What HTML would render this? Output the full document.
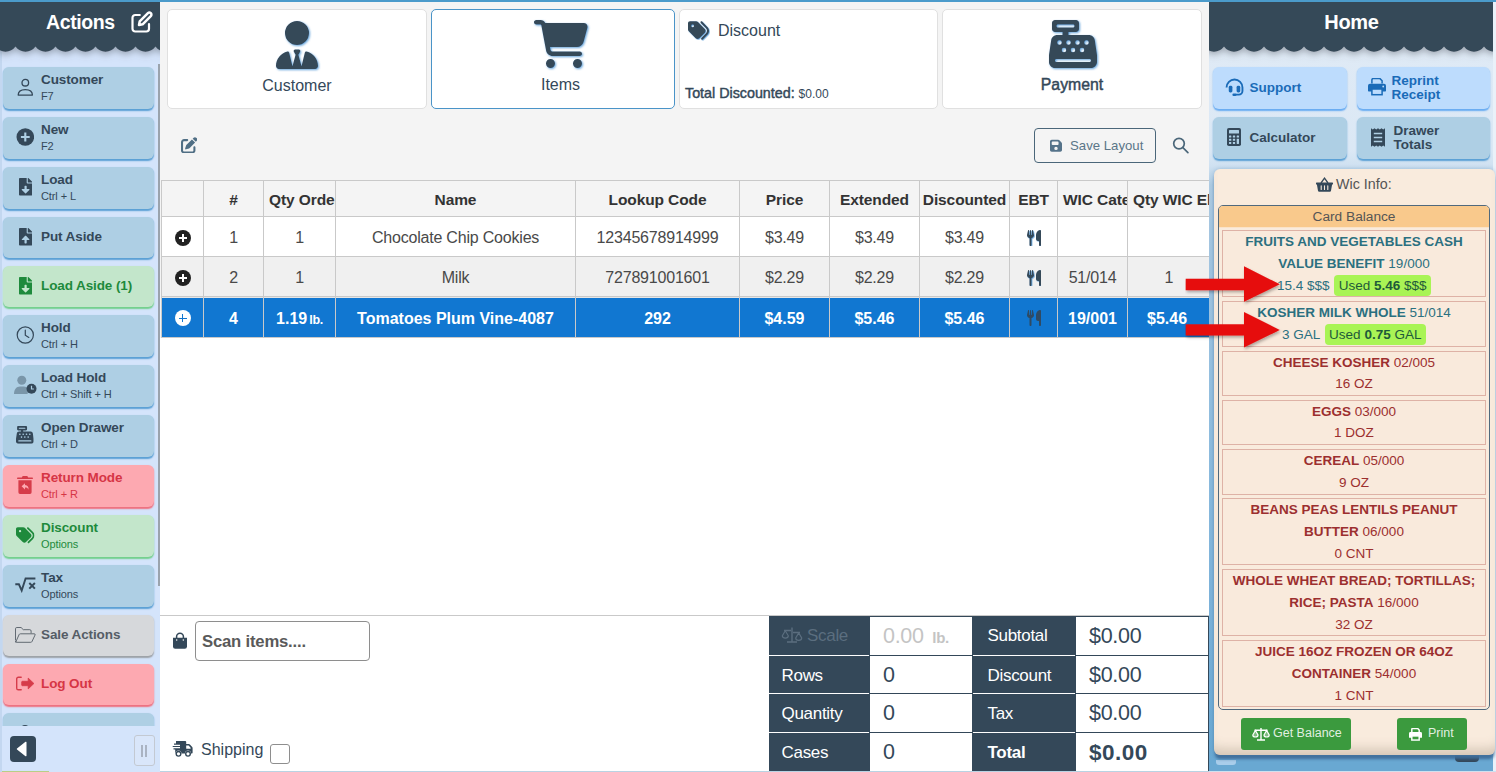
<!DOCTYPE html>
<html lang="en">
<head>
<meta charset="utf-8">
<title>POS</title>
<style>
*{box-sizing:border-box;margin:0;padding:0}
html,body{width:1496px;height:772px;overflow:hidden;background:#f4f4f4;font-family:"Liberation Sans",sans-serif;color:#344859}
.abs{position:absolute}
#app{position:relative;width:1496px;height:772px;overflow:hidden;background:#f4f4f4}
#topstrip{left:0;top:0;width:1496px;height:2px;background:#4b9bcb;z-index:50}
/* ---------- left sidebar ---------- */
#left{left:0;top:0;width:160px;height:772px;background:#d4e4fb;overflow:hidden}
.hdr{left:0;top:0;height:47px;background:#344859;color:#fff;font-weight:bold;font-size:19px}
.scal{left:0;top:41px;height:12px}
.lb{left:3px;width:151px;height:42px;border-radius:6px;background:#aecfe4;box-shadow:0 1.500px 1.500px 0 #5a9fd4;color:#344859}
.lb .t{position:absolute;left:38px;top:5px;font-size:13.500px;font-weight:bold;letter-spacing:-0.1px;white-space:nowrap;line-height:16px}
.lb .s{position:absolute;left:38px;top:22px;font-size:11px;white-space:nowrap;line-height:14px;letter-spacing:-0.1px}
.lb.one{height:40px}
.lb.one .t{top:12px}
.lb svg{position:absolute}
.lb.g{background:#c3e6cb;box-shadow:0 1.500px 1.500px 0 #72cf8c;color:#1e8a3c}
.lb.r{background:#fda9b1;box-shadow:0 1.500px 1.500px 0 #ef6f7e;color:#d63545}
.lb.gr{background:#d6d8db;box-shadow:0 1.500px 1.500px 0 #9da1a6;color:#555d66}
/* ---------- main ---------- */
.card{top:9px;height:100px;background:#fff;border:1px solid #e0e0e0;border-radius:5px}
.card .lbl{position:absolute;left:0;right:0;text-align:center;font-size:16px;top:66px;line-height:20px}

#grid table{border-collapse:collapse;table-layout:fixed;width:1066px;font-size:16px;color:#333}
#grid th,#grid td{border:1px solid #c9c9c9;text-align:center;white-space:nowrap;overflow:hidden;padding:0;position:relative}
#grid th{height:36px;padding-top:2.500px;background:#f4f4f4;font-weight:bold;font-size:15.500px;color:#333;letter-spacing:-0.100px}
#grid th.cl{text-align:left;padding-left:5px}
#grid td{height:40px;padding-top:3px;letter-spacing:-0.200px;color:#494949}
#grid tr.r1 td{background:#fff}
#grid tr.r2 td{background:#f0f0f0}
#grid tr.r3 td{padding-top:3px;box-shadow:inset 0 1px 0 #e6e6e6;background:#1177d1;color:#fff;font-weight:bold;border-color:#c9c9c9;letter-spacing:0;height:41px}
i.pc{display:inline-block;width:16px;height:16px;border-radius:50%;background:#222;position:relative;vertical-align:middle;top:-1px}
i.pc:before,i.pc:after{content:"";position:absolute;background:#fff;left:4px;top:7px;width:8px;height:2px}
i.pc:after{left:7px;top:4px;width:2px;height:8px}
i.pc.w{background:#fff}
i.pc.w:before,i.pc.w:after{background:#1177d1;height:1.500px;top:7.250px}
i.pc.w:after{width:1.500px;left:7.250px;top:4px;height:8px}

#tot .tl,#tot .tv{position:absolute;overflow:hidden}
#tot .tl{background:#344859;color:#fff;font-size:17px;border-bottom:1px solid #fff}
#tot .tl span{left:14.500px}
#tot .tv{background:#fff;color:#344859;font-size:21.500px;border:1px solid #344859;border-top:none}
#tot span{position:absolute;left:13px;top:0;line-height:39px;white-space:nowrap;letter-spacing:-0.300px}
svg.ut{vertical-align:middle;position:relative;top:-1px}

.rb{height:42px;border-radius:6px;font-size:13.500px;font-weight:bold;white-space:nowrap}
.rb.b1{background:#bddcfd;box-shadow:0 1.500px 1.500px 0 #68acf2;color:#1a6bb8}
.rb.b2{background:#aecfe4;box-shadow:0 1.500px 1.500px 0 #5a9fd4;color:#344859}
#wic{background:#f9ebdd;border-radius:6px;box-shadow:0 0 4px 0 rgba(90,140,185,.45),0 5px 3px -1px rgba(60,105,150,.95),inset 0 -14px 12px -8px rgba(120,100,80,.28)}
#cb{border:1px solid #50697d;border-radius:5px}
.wi{position:absolute;left:3px;width:264px;border:1px solid #deb2a6;text-align:center;font-size:13.500px;line-height:21.800px;color:#9c2f2f;white-space:nowrap;background:#f9eadc;overflow:hidden}
.wi.t{color:#2b7080}
.wi b{font-weight:bold}
.wi .u{display:inline-block;background:#a9f455;color:#1f5a3a;border-radius:4px;padding:0 4.500px;line-height:21px;margin-left:1px}
.gb{height:32px;background:#3b9a3e;border-radius:3px;color:rgba(255,255,255,.86);font-size:12.500px;line-height:31.500px;white-space:nowrap}
</style>
</head>
<body>
<div id="app">
<svg width="0" height="0" style="position:absolute"><defs><filter id="ish" x="-20%" y="-20%" width="150%" height="150%"><feDropShadow dx="1" dy="1" stdDeviation="1" flood-color="#3a8bd0" flood-opacity="0.800"/></filter><filter id="ish2" x="-20%" y="-20%" width="150%" height="150%"><feDropShadow dx="0.700" dy="0.700" stdDeviation="0.700" flood-color="#3a8bd0" flood-opacity="0.800"/></filter><filter id="ash" x="-10%" y="-20%" width="125%" height="150%"><feDropShadow dx="1" dy="2" stdDeviation="1.500" flood-color="#000" flood-opacity="0.300"/></filter><symbol id="i-cart" viewBox="0 0 576 512"><path d="M0 24C0 10.700 10.700 0 24 0H69.500c22 0 41.500 12.800 50.600 32h411c26.300 0 45.500 25 38.600 50.400l-41 152.300c-8.500 31.400-37 53.300-69.500 53.300H170.700l5.400 28.500c2.200 11.300 12.100 19.500 23.600 19.500H488c13.300 0 24 10.700 24 24s-10.700 24-24 24H199.700c-34.600 0-64.300-24.600-70.700-58.500L77.400 54.500c-.7-3.800-4-6.500-7.900-6.500H24C10.700 48 0 37.300 0 24zM128 464a48 48 0 1 1 96 0 48 48 0 1 1 -96 0zm336-48a48 48 0 1 1 0 96 48 48 0 1 1 0-96z"/></symbol><symbol id="i-reg" viewBox="0 0 512 512"><path d="M64 0C46.300 0 32 14.300 32 32V96c0 17.700 14.300 32 32 32h80v32H87c-31.600 0-58.500 23.100-63.300 54.400L1.100 364.100C.4 368.800 0 373.600 0 378.400V448c0 35.300 28.700 64 64 64H448c35.300 0 64-28.700 64-64V378.400c0-4.800-.4-9.600-1.100-14.400L488.200 214.400C483.500 183.100 456.600 160 425 160H208V128h80c17.700 0 32-14.300 32-32V32c0-17.700-14.300-32-32-32H64zM96 48H256c8.800 0 16 7.200 16 16s-7.200 16-16 16H96c-8.800 0-16-7.200-16-16s7.200-16 16-16zM64 432c0-8.800 7.200-16 16-16H432c8.800 0 16 7.200 16 16s-7.200 16-16 16H80c-8.800 0-16-7.200-16-16zm48-168a24 24 0 1 1 0-48 24 24 0 1 1 0 48zm120-24a24 24 0 1 1 -48 0 24 24 0 1 1 48 0zM160 344a24 24 0 1 1 0-48 24 24 0 1 1 0 48zM328 240a24 24 0 1 1 -48 0 24 24 0 1 1 48 0zM256 344a24 24 0 1 1 0-48 24 24 0 1 1 0 48zM424 240a24 24 0 1 1 -48 0 24 24 0 1 1 48 0zM352 344a24 24 0 1 1 0-48 24 24 0 1 1 0 48z"/></symbol><symbol id="i-tie" viewBox="0 0 448 512"><path d="M96 128a128 128 0 1 0 256 0A128 128 0 1 0 96 128zm94.500 200.200l18.600 31L175.800 483.100l-36-146.900c-2-8.100-9.800-13.400-17.900-11.300C51.900 342.400 0 405.800 0 481.300c0 17 13.800 30.700 30.700 30.700H162.500c0 0 0 0 .1 0H168 280h5.500c0 0 0 0 .1 0H417.300c17 0 30.700-13.800 30.700-30.700c0-75.500-51.900-138.900-121.900-156.400c-8.100-2-15.900 3.300-17.900 11.300l-36 146.900L238.900 359.200l18.600-31c6.400-10.700-1.300-24.200-13.700-24.200H224 204.300c-12.400 0-20.100 13.600-13.700 24.200z"/></symbol><symbol id="i-tags" viewBox="0 0 512 512"><path d="M345 39.100L472.800 168.400c52.400 53 52.400 138.200 0 191.200L360.800 472.900c-9.300 9.400-24.500 9.500-33.900 .2s-9.500-24.500-.2-33.900L438.600 325.900c33.900-34.300 33.900-89.400 0-123.700L310.900 72.900c-9.300-9.400-9.200-24.600 .2-33.900s24.600-9.200 33.900 .2zM0 229.500V80C0 53.500 21.500 32 48 32H197.500c17 0 33.300 6.700 45.300 18.700l168 168c25 25 25 65.500 0 90.500L277.300 442.700c-25 25-65.500 25-90.500 0l-168-168C6.700 262.700 0 246.500 0 229.500zM144 144a32 32 0 1 0 -64 0 32 32 0 1 0 64 0z"/></symbol><symbol id="i-pen" viewBox="0 0 512 512"><path d="M471.600 21.700c-21.900-21.900-57.300-21.900-79.200 0L362.300 51.700l97.900 97.900 30.100-30.100c21.900-21.900 21.900-57.300 0-79.200L471.600 21.700zm-299.200 220c-6.100 6.100-10.800 13.600-13.500 21.900l-29.600 88.800c-2.900 8.600-.6 18.100 5.800 24.600s15.900 8.700 24.600 5.800l88.800-29.600c8.200-2.700 15.700-7.400 21.900-13.500L437.700 172.300 339.700 74.300 172.400 241.700zM96 64C43 64 0 107 0 160V416c0 53 43 96 96 96H352c53 0 96-43 96-96V320c0-17.700-14.300-32-32-32s-32 14.300-32 32v96c0 17.700-14.300 32-32 32H96c-17.700 0-32-14.300-32-32V160c0-17.700 14.300-32 32-32h96c17.700 0 32-14.300 32-32s-14.300-32-32-32H96z"/></symbol><symbol id="i-floppy" viewBox="0 0 448 512"><path d="M64 32C28.700 32 0 60.700 0 96V416c0 35.300 28.700 64 64 64H384c35.300 0 64-28.700 64-64V173.300c0-17-6.700-33.300-18.700-45.300L352 50.700C340 38.700 323.700 32 306.700 32H64zm0 96c0-17.700 14.300-32 32-32H288c17.700 0 32 14.300 32 32v64c0 17.700-14.300 32-32 32H96c-17.700 0-32-14.300-32-32V128zM224 288a64 64 0 1 1 0 128 64 64 0 1 1 0-128z"/></symbol><symbol id="ut" viewBox="0 0 448 512"><path d="M416 0C400 0 288 32 288 176V288c0 35.300 28.700 64 64 64h32V480c0 17.700 14.300 32 32 32s32-14.300 32-32V352 240 32c0-17.700-14.300-32-32-32zM64 16C64 7.800 57.900 1 49.700 .1S34.200 4.600 32.400 12.500L2.100 148.800C.7 155.100 0 161.500 0 167.900c0 45.900 35.100 83.600 80 87.700V480c0 17.700 14.300 32 32 32s32-14.300 32-32V255.600c44.900-4.100 80-41.800 80-87.700c0-6.400-.7-12.800-2.100-19.100L191.600 12.500c-1.800-8-9.300-13.300-17.400-12.400S160 7.800 160 16V150.200c0 5.400-4.400 9.800-9.800 9.800c-5.100 0-9.300-3.900-9.800-9L127.900 14.600C127.200 6.300 120.300 0 112 0s-15.200 6.300-15.900 14.600L83.700 151c-.5 5.100-4.700 9-9.800 9c-5.400 0-9.800-4.400-9.800-9.800V16z"/></symbol></defs></svg>
<div id="topstrip" class="abs"></div>

<!-- LEFT SIDEBAR -->
<div id="left" class="abs">
  <div class="abs" style="left:158px;top:64px;width:2px;height:522px;background:#9aa3ad"></div>
  <div id="lbtns">
  <div class="abs lb" style="top:67px">
    <svg style="left:12px;top:10px" width="22" height="22" viewBox="0 0 22 22" fill="none" stroke="#344859" stroke-width="1.3"><circle cx="10.3" cy="5.7" r="3.3"/><path d="M3.2,18.1 C3.2,14.3 6,12.7 10.3,12.7 C14.6,12.7 17.4,14.3 17.4,18.1 Z" stroke-linejoin="round"/></svg>
    <span class="t">Customer</span><span class="s">F7</span></div>
  <div class="abs lb" style="top:117px">
    <svg style="left:13px;top:11px" width="18" height="18" viewBox="0 0 18 18"><circle cx="9.3" cy="9" r="8.8" fill="#344859"/><path d="M9.3,4.6v8.8M4.9,9h8.8" stroke="#aecfe4" stroke-width="2.1"/></svg>
    <span class="t">New</span><span class="s">F2</span></div>
  <div class="abs lb" style="top:167px">
    <svg style="left:15.8px;top:11.2px" width="13.2" height="17.6" viewBox="0 0 384 512"><path fill="#344859" d="M224 136V0H24C10.700 0 0 10.700 0 24v464c0 13.300 10.700 24 24 24h336c13.300 0 24-10.700 24-24V160H248c-13.200 0-24-10.800-24-24zM377 105L279.100 7c-4.500-4.500-10.600-7-17-7H256v128h128v-6.100c0-6.300-2.500-12.400-7-16.900z"/><path fill="#aecfe4" d="M300 347l-96 96c-6.600 6.600-17.400 6.600-24 0l-96-96c-10-10-3-27 11-27H160v-80c0-9 7-16 16-16h32c9 0 16 7 16 16v80h65c14 0 21 17 11 27z"/></svg>
    <span class="t">Load</span><span class="s">Ctrl + L</span></div>
  <div class="abs lb one" style="top:217px;height:41px">
    <svg style="left:15.8px;top:11.3px" width="13.2" height="17.6" viewBox="0 0 384 512"><path fill="#344859" d="M224 136V0H24C10.700 0 0 10.700 0 24v464c0 13.300 10.700 24 24 24h336c13.300 0 24-10.700 24-24V160H248c-13.200 0-24-10.800-24-24zM377 105L279.100 7c-4.500-4.500-10.600-7-17-7H256v128h128v-6.100c0-6.300-2.500-12.400-7-16.900z"/><path fill="#aecfe4" d="M289 352H224v80c0 9-7 16-16 16h-32c-9 0-16-7-16-16v-80H95c-14 0-21-17-11-27l96-96c6.600-6.600 17.400-6.600 24 0l96 96c10 10 3 27-11 27z"/></svg>
    <span class="t">Put Aside</span></div>
  <div class="abs lb one g" style="top:266px;height:41px">
    <svg style="left:15.8px;top:11.3px" width="13.2" height="17.6" viewBox="0 0 384 512"><path fill="#1e8a3c" d="M224 136V0H24C10.700 0 0 10.700 0 24v464c0 13.300 10.700 24 24 24h336c13.300 0 24-10.700 24-24V160H248c-13.200 0-24-10.800-24-24zM377 105L279.100 7c-4.500-4.500-10.600-7-17-7H256v128h128v-6.100c0-6.300-2.500-12.400-7-16.900z"/><path fill="#c3e6cb" d="M300 347l-96 96c-6.600 6.600-17.400 6.600-24 0l-96-96c-10-10-3-27 11-27H160v-80c0-9 7-16 16-16h32c9 0 16 7 16 16v80h65c14 0 21 17 11 27z"/></svg>
    <span class="t">Load Aside (1)</span></div>
  <div class="abs lb" style="top:315px">
    <svg style="left:13px;top:11px" width="18" height="18" viewBox="0 0 18 18" fill="none" stroke="#344859" stroke-width="1.2"><circle cx="9.3" cy="9" r="8.1"/><path d="M9.3,4.2V9.2L12.8,11.4" stroke-linecap="round"/></svg>
    <span class="t">Hold</span><span class="s">Ctrl + H</span></div>
  <div class="abs lb" style="top:365px">
    <svg style="left:10px;top:9px" width="26" height="22" viewBox="0 0 26 22"><g fill="#344859" opacity="0.42"><circle cx="8.8" cy="6.3" r="4.5"/><path d="M1,20 C1,15.200 3.600,12.500 7,12.500 H10.600 C13,12.500 14.800,13.600 15.600,15.500 L14.500,20 Z"/></g><circle cx="18.500" cy="14.800" r="5" fill="#344859"/><path d="M18.500,11.800V15H20.900" stroke="#aecfe4" stroke-width="1.2" fill="none"/></svg>
    <span class="t">Load Hold</span><span class="s">Ctrl + Shift + H</span></div>
  <div class="abs lb" style="top:415px">
    <svg style="left:13.300px;top:11px" width="17.700" height="17.700"><use href="#i-reg" fill="#344859"/></svg>
    <span class="t">Open Drawer</span><span class="s">Ctrl + D</span></div>
  <div class="abs lb r" style="top:465px">
    <svg style="left:14px;top:11px" width="17" height="19" viewBox="0 0 17 19"><g fill="#d63c4a"><path d="M0.600,1.400h4.200l.5-.9a.8.800 0 0 1 .7-.4h4a.8.800 0 0 1 .7.400l.5.900h4.200a.5.500 0 0 1 .5.500v.7a.5.500 0 0 1-.5.500H0.600a.5.500 0 0 1-.5-.5v-.7a.5.500 0 0 1 .5-.5z"/><path d="M1.400,4.300h13.200v12a1.600,1.600 0 0 1-1.600,1.600H3a1.600,1.600 0 0 1-1.600-1.600z"/></g><path d="M8,7.200L4.600,10.300L8,13.400v-2c2,0 3,.6 3.400,2.400c.5-2.700-.7-4.600-3.400-4.700z" fill="#fda9b1"/></svg>
    <span class="t">Return Mode</span><span class="s">Ctrl + R</span></div>
  <div class="abs lb g" style="top:515px">
    <svg style="left:13px;top:10.500px" width="18.500" height="18.500"><use href="#i-tags" fill="#1e8a3c"/></svg>
    <span class="t">Discount</span><span class="s">Options</span></div>
  <div class="abs lb" style="top:565px">
    <svg style="left:11px;top:11px" width="23" height="17" viewBox="0 0 23 17" fill="none" stroke="#344859"><path d="M1.300,8.300h3.600l2.800,6.200L11.600,2.500h9.800" stroke-width="1.900" stroke-linejoin="miter"/><path d="M15.300,7l5.600,5.600M20.900,7l-5.600,5.600" stroke-width="2"/></svg>
    <span class="t">Tax</span><span class="s">Options</span></div>
  <div class="abs lb one gr" style="top:615px;height:41px">
    <svg style="left:11px;top:11px" width="23" height="18" viewBox="0 0 23 18" fill="none" stroke="#555d66" stroke-width="0.900" stroke-linejoin="round"><path d="M1.500,14.500V2.800a1.300,1.300 0 0 1 1.300-1.300h4.300l2.200,2.200h6.500a1.300,1.300 0 0 1 1.300,1.300v2.300"/><path d="M1.700,16.200l3.400-7.600a1.300,1.300 0 0 1 1.200-.8h13.900a.9.900 0 0 1 .8,1.300l-3,6.400a1.300,1.300 0 0 1-1.200.8H2.300a.7.700 0 0 1-.6-1z"/></svg>
    <span class="t">Sale Actions</span></div>
  <div class="abs lb one r" style="top:664px;height:41px">
    <svg style="left:12px;top:11px" width="21" height="18" viewBox="0 0 21 18"><path d="M6.200,2.200H3.300a1.600,1.600 0 0 0-1.600,1.600v9.400a1.600,1.600 0 0 0 1.600,1.600h2.900" fill="none" stroke="#d63c4a" stroke-width="1.400" stroke-linecap="round"/><path d="M13.200,3.100l5.700,5.400l-5.700,5.400v-3.200H7.400a.7.700 0 0 1-.7-.7v-3a.7.700 0 0 1 .7-.7h5.800z" fill="#d63c4a" stroke="#d63c4a" stroke-width=".8" stroke-linejoin="round"/></svg>
    <span class="t">Log Out</span></div>
  <div class="abs lb" style="top:713px">
    <svg style="left:13px;top:10px" width="18" height="18" viewBox="0 0 18 18"><circle cx="9" cy="6" r="4" fill="#344859"/></svg></div>
  </div>
  <div class="abs" style="left:0;top:726px;width:160px;height:46px;background:#d4e4fb"></div>
  <div class="abs" style="left:10px;top:736px;width:26px;height:26px;background:#344859;border-radius:4px"><svg class="abs" style="left:0;top:0" width="26" height="26" viewBox="0 0 26 26"><path d="M16.500,6.200v13.600a.6.600 0 0 1-1,.4L7,13.500a.7.700 0 0 1 0-1L15.500,5.800a.6.600 0 0 1 1,.4z" fill="#fff"/></svg></div>
  <div class="abs" style="left:133.500px;top:735px;width:21px;height:30.500px;border:1px solid #c3c9d2;border-radius:3px;background:#d9e6fa"><div class="abs" style="left:6.500px;top:8.500px;width:2px;height:12px;background:#aab3c2"></div><div class="abs" style="left:10.500px;top:8.500px;width:2px;height:12px;background:#aab3c2"></div></div>
  <div class="abs" style="left:0;top:771px;width:49px;height:1px;background:#b9cf86"></div>
  <div class="abs" style="left:0;top:47px;width:2px;height:725px;background:#c3d7f0"></div>
  <svg class="abs" style="left:0;top:0;overflow:hidden" width="160" height="80" viewBox="0 0 160 80"><defs><filter id="sh1" x="-10%" y="-10%" width="120%" height="160%"><feDropShadow dx="0" dy="2.500" stdDeviation="3.500" flood-color="#5a6068" flood-opacity="0.500"/></filter></defs><path d="M-4.5,-10 L-4.5,46.5 A12.3,12.3 0 0 0 15.5,46.5 A12.3,12.3 0 0 0 35.5,46.5 A12.3,12.3 0 0 0 55.5,46.5 A12.3,12.3 0 0 0 75.5,46.5 A12.3,12.3 0 0 0 95.5,46.5 A12.3,12.3 0 0 0 115.5,46.5 A12.3,12.3 0 0 0 135.5,46.5 A12.3,12.3 0 0 0 155.5,46.5 A12.3,12.3 0 0 0 175.5,46.5 L175.5,-10 Z" fill="#344859" filter="url(#sh1)"/></svg>
  <div class="abs hdr" style="width:160px;background:none"><span class="abs" style="left:46px;top:11px;line-height:22px;letter-spacing:-0.4px;font-size:19.500px">Actions</span><svg class="abs" style="left:129px;top:10px" width="25" height="25" viewBox="0 0 25 25" fill="none" stroke="#fff" stroke-width="2.200" stroke-linecap="round" stroke-linejoin="round"><path d="M10.800,5H6.200A2.700,2.700 0 0 0 3.500,7.700V18.800a2.700,2.700 0 0 0 2.700,2.700H17.300a2.700,2.700 0 0 0 2.700-2.700V14.200"/><path d="M10,15l.7-3.600l8.200-8.200a2,2 0 0 1 2.900,2.900l-8.200,8.200z" stroke-width="2.500"/></svg></div>
</div>

<!-- MAIN -->
<div id="main" class="abs" style="left:160px;top:0;width:1049px;height:772px">
  <!-- top cards -->
  <div class="abs card" style="left:7px;width:260px">
    <svg class="abs" style="left:108px;top:10.500px;overflow:visible" width="42" height="48"><use href="#i-tie" fill="#344859" filter="url(#ish)"/></svg>
    <div class="lbl" style="top:66px">Customer</div>
  </div>
  <div class="abs card" style="left:271px;width:244px;border-color:#4a94c8">
    <svg class="abs" style="left:101.500px;top:9.500px;overflow:visible" width="54" height="48"><use href="#i-cart" fill="#344859" filter="url(#ish)"/></svg>
    <div class="lbl" style="top:65px;left:7.500px;right:-7.500px">Items</div>
  </div>
  <div class="abs card" style="left:519px;width:259px">
    <svg class="abs" style="left:8px;top:10px;overflow:visible" width="21" height="21"><use href="#i-tags" fill="#344859" filter="url(#ish2)"/></svg>
    <div class="abs" style="left:38px;top:11px;font-size:16px;line-height:20px">Discount</div>
    <div class="abs" style="left:5px;top:73.500px;font-size:14px;line-height:18px;white-space:nowrap"><b style="font-weight:normal;font-size:14.300px;-webkit-text-stroke:0.450px #344859">Total Discounted:</b> <span style="font-size:12px">$0.00</span></div>
  </div>
  <div class="abs card" style="left:782px;width:260px">
    <svg class="abs" style="left:105.500px;top:10px;overflow:visible" width="48" height="48"><use href="#i-reg" fill="#344859" filter="url(#ish)"/></svg>
    <div class="lbl" style="top:65px;font-size:15.800px;-webkit-text-stroke:0.450px #344859">Payment</div>
  </div>

  <!-- toolbar -->
  <svg class="abs" style="left:20.500px;top:136.500px" width="16.500" height="16.500"><use href="#i-pen" fill="#4f6e84"/></svg>
  <div class="abs" style="left:874px;top:128px;width:122px;height:35px;border:1px solid #4a6679;border-radius:4px;color:#5b7688;font-size:13.200px;line-height:33px;white-space:nowrap">
    <svg class="abs" style="left:15px;top:10px" width="12" height="13.700"><use href="#i-floppy" fill="#55738a"/></svg>
    <span class="abs" style="left:35px;top:0">Save Layout</span>
  </div>
  <svg class="abs" style="left:1010px;top:136px" width="20" height="20" viewBox="0 0 20 20" fill="none" stroke="#4a6679" stroke-width="1.700" stroke-linecap="round"><circle cx="9" cy="7.600" r="5.300"/><path d="M12.900,11.600l5,5"/></svg>

  <!-- grid -->
  <div class="abs" id="grid" style="left:1px;top:180px;width:1048px;height:158px;overflow:hidden">
  <table>
    <tr class="h"><th style="width:42px"></th><th style="width:60px">#</th><th style="width:72px" class="cl">Qty Ordered</th><th style="width:240px">Name</th><th style="width:164px">Lookup Code</th><th style="width:90px">Price</th><th style="width:90px">Extended</th><th style="width:90px" class="cl2">Discounted</th><th style="width:48px">EBT</th><th style="width:70px" class="cl">WIC Category</th><th style="width:100px" class="cl">Qty WIC Eligible</th></tr>
    <tr class="r1"><td><i class="pc"></i></td><td>1</td><td>1</td><td>Chocolate Chip Cookies</td><td>12345678914999</td><td>$3.49</td><td>$3.49</td><td>$3.49</td><td><svg class="ut" width="14" height="16"><use href="#ut" fill="#344859" filter="url(#ish2)"/></svg></td><td></td><td></td></tr>
    <tr class="r2"><td><i class="pc"></i></td><td>2</td><td>1</td><td>Milk</td><td>727891001601</td><td>$2.29</td><td>$2.29</td><td>$2.29</td><td><svg class="ut" width="14" height="16"><use href="#ut" fill="#344859" filter="url(#ish2)"/></svg></td><td>51/014</td><td style="text-align:left;padding-left:36.500px">1</td></tr>
    <tr class="r3"><td><i class="pc w"></i></td><td>4</td><td>1.19<span style="font-size:12.500px;font-weight:bold;letter-spacing:-0.300px;margin-left:2px">lb.</span></td><td>Tomatoes Plum Vine-4087</td><td>292</td><td>$4.59</td><td>$5.46</td><td>$5.46</td><td><svg class="ut" width="14" height="16"><use href="#ut" fill="#2f4a63"/></svg></td><td>19/001</td><td style="text-align:left;padding-left:19px">$5.46</td></tr>
  </table>
  </div>

  <!-- bottom -->
  <div class="abs" style="left:0;top:771px;width:1049px;height:1px;background:#b9d3e3;z-index:5"></div>
  <div class="abs" style="left:0;top:338px;width:1049px;height:277px;background:#fff"></div>
  <div class="abs" style="left:0;top:615px;width:1049px;height:157px;background:#fff;border-top:1px solid #c9c9c9"></div>
  <svg class="abs" style="left:12px;top:632px" width="16" height="18" viewBox="0 0 16 18"><path d="M4.600,6V4.600a3.400,3.400 0 0 1 6.800,0V6" fill="none" stroke="#344859" stroke-width="1.500"/><path d="M1,5.800h14v8.700a2.200,2.200 0 0 1-2.200,2.200H3.200A2.200,2.200 0 0 1 1,14.500z" fill="#344859"/><circle cx="4.700" cy="8" r=".750" fill="#fff"/><circle cx="11.300" cy="8" r=".750" fill="#fff"/></svg>
  <div class="abs" style="left:35px;top:621px;width:175px;height:40px;border:1px solid #8e8e8e;border-radius:4px;background:#fff;font-size:16.700px;font-weight:bold;color:#5a5a5a;line-height:40px;padding-left:6px;letter-spacing:-0.200px">Scan items....</div>
  <svg class="abs" style="left:12px;top:740px" width="21" height="18" viewBox="0 0 21 18"><g fill="#344859"><path d="M4,1h9.200a1,1 0 0 1 1,1v2h2.600a1.500,1.500 0 0 1 1.100.5l2.300,2.600a1.500,1.500 0 0 1 .4,1v4.600a.8.800 0 0 1-.8.800H19a3,3 0 0 0-6,0H9.500a3,3 0 0 0-6,0H3.200V9.500H1.500V8.300H8V7.100H0.700V5.900H8V4.700H2V3.500H4z"/><circle cx="6.500" cy="13.800" r="2.300" fill="none" stroke="#344859" stroke-width="1.400"/><circle cx="16" cy="13.800" r="2.300" fill="none" stroke="#344859" stroke-width="1.400"/></g><path d="M14.200,5.400h2.400l2,2.300v1h-4.400z" fill="#fff"/></svg>
  <div class="abs" style="left:41px;top:740px;font-size:16px;line-height:20px">Shipping</div>
  <div class="abs" style="left:110px;top:744px;width:20px;height:20px;border:1px solid #8e8e8e;border-radius:3px;background:#fff"></div>

  <div class="abs" id="tot" style="left:609px;top:616px;width:440px;height:155px">
    <div class="tl" style="left:0;top:0;width:100px;height:39.500px;color:#5b6e7f"><svg class="abs" style="left:12px;top:10px" width="22" height="18" viewBox="0 0 22 18" fill="none" stroke="#5b6e7f" stroke-width="1.200"><path d="M11,1.500V15.500M6,16h10M3,4.500h7M12,6.500h7" stroke-width="1.400"/><path d="M1.300,9.800L4.300,4.800L7.300,9.800a3,2.300 0 0 1-6,0z"/><path d="M14.700,12L17.700,7L20.700,12a3,2.300 0 0 1-6,0z"/></svg><span style="left:38px">Scale</span></div>
    <div class="tv" style="left:100px;top:0;width:104px;height:39.500px;color:#c4c4c4;border-top:1px solid #344859"><span style="left:13px">0.00 <b style="font-size:15px;margin-left:3px">lb.</b></span></div>
    <div class="tl" style="left:204px;top:0;width:102px;height:39.500px"><span>Subtotal</span></div>
    <div class="tv" style="left:306px;top:0;width:134px;height:39.500px;border-top:1px solid #344859"><span>$0.00</span></div>

    <div class="tl" style="left:0;top:39.500px;width:100px;height:38px"><span style="left:12.500px">Rows</span></div>
    <div class="tv" style="left:100px;top:39.500px;width:104px;height:38px"><span>0</span></div>
    <div class="tl" style="left:204px;top:39.500px;width:102px;height:38px"><span>Discount</span></div>
    <div class="tv" style="left:306px;top:39.500px;width:134px;height:38px"><span>$0.00</span></div>

    <div class="tl" style="left:0;top:77.500px;width:100px;height:39px"><span style="left:12.500px">Quantity</span></div>
    <div class="tv" style="left:100px;top:77.500px;width:104px;height:39px"><span>0</span></div>
    <div class="tl" style="left:204px;top:77.500px;width:102px;height:39px"><span>Tax</span></div>
    <div class="tv" style="left:306px;top:77.500px;width:134px;height:39px"><span>$0.00</span></div>

    <div class="tl" style="left:0;top:116.500px;width:100px;height:39px;border-bottom:none"><span style="left:12.500px">Cases</span></div>
    <div class="tv" style="left:100px;top:116.500px;width:104px;height:39px"><span>0</span></div>
    <div class="tl" style="left:204px;top:116.500px;width:102px;height:39px;border-bottom:none"><span style="font-weight:bold">Total</span></div>
    <div class="tv" style="left:306px;top:116.500px;width:134px;height:39px"><span style="font-weight:bold;font-size:22.500px;letter-spacing:0.500px">$0.00</span></div>
  </div>
</div>

<!-- RIGHT SIDEBAR -->
<div id="right" class="abs" style="left:1209px;top:0;width:287px;height:772px;background:linear-gradient(to bottom,#e1ebf6 0,#dbe8f5 150px,#cfe1f1 166px,#aecbe2 185px,#a5c6e0 230px,#93bfdf 400px,#7db3da 600px,#69a8d2 760px)">
  <div class="abs" style="left:284px;top:0;width:3px;height:772px;background:#e9f1f9"></div>
  <div class="abs" style="left:7px;top:760px;width:20px;height:5px;background:#a9cdea;border-radius:0 0 3px 3px"></div>
  <div class="abs" style="left:246px;top:755px;width:24px;height:7px;background:#344859;border-radius:0 0 4px 4px"></div>
  <div class="abs" style="left:0;top:771px;width:287px;height:1px;background:#cfe0ee"></div>
  <svg class="abs" style="left:0;top:0;overflow:hidden" width="284" height="80" viewBox="0 0 284 80"><path d="M-5,-10 L-5,46.5 A12.3,12.3 0 0 0 15,46.5 A12.3,12.3 0 0 0 35,46.5 A12.3,12.3 0 0 0 55,46.5 A12.3,12.3 0 0 0 75,46.5 A12.3,12.3 0 0 0 95,46.5 A12.3,12.3 0 0 0 115,46.5 A12.3,12.3 0 0 0 135,46.5 A12.3,12.3 0 0 0 155,46.5 A12.3,12.3 0 0 0 175,46.5 A12.3,12.3 0 0 0 195,46.5 A12.3,12.3 0 0 0 215,46.5 A12.3,12.3 0 0 0 235,46.5 A12.3,12.3 0 0 0 255,46.5 A12.3,12.3 0 0 0 275,46.5 A12.3,12.3 0 0 0 295,46.5 L295,-10 Z" fill="#344859" filter="url(#sh1)"/></svg>
  <div class="abs hdr" style="width:284px;text-align:center;background:none"><span class="abs" style="left:0;width:285px;top:11px;line-height:22px;letter-spacing:-0.3px;font-size:20px">Home</span></div>
  <!-- right buttons -->
  <div class="abs rb b1" style="left:4px;top:67px;width:133.700px">
    <svg class="abs" style="left:11px;top:10px" width="21" height="21" viewBox="0 0 19 19"><path d="M2.300,9.500a7.200,7.200 0 0 1 14.400,0v3.200a3.300,3.300 0 0 1-3.300,3.300H10.500" fill="none" stroke="#1a6bb8" stroke-width="1.700"/><rect x="4.300" y="8" width="3.300" height="6" rx="1.300" fill="#1a6bb8"/><rect x="11.400" y="8" width="3.300" height="6" rx="1.300" fill="#1a6bb8"/><rect x="7.600" y="14.900" width="3.700" height="2.200" rx="1.100" fill="#1a6bb8"/></svg>
    <span class="abs" style="left:36.500px;top:12px;line-height:18px">Support</span></div>
  <div class="abs rb b1" style="left:147.500px;top:67px;width:133px">
    <svg class="abs" style="left:11px;top:11px" width="18" height="18" viewBox="0 0 18 18"><path d="M3.900,5.500V1.800a1.200,1.200 0 0 1 1.200-1.200h6.900l2.100,2.100v2.800" fill="none" stroke="#1a6bb8" stroke-width="1.500"/><path d="M2,5.700h14a2,2 0 0 1 2,2v5a.7.700 0 0 1-.7.700H.7a.7.700 0 0 1-.7-.7v-5a2,2 0 0 1 2-2z" fill="#1a6bb8"/><rect x="3.900" y="11" width="10.200" height="5.700" fill="#bddcfd" stroke="#1a6bb8" stroke-width="1.500"/><circle cx="15.200" cy="8.500" r=".9" fill="#bddcfd"/></svg>
    <span class="abs" style="left:35px;top:7px;line-height:14px">Reprint<br>Receipt</span></div>
  <div class="abs rb b2" style="left:4px;top:117px;width:133.700px">
    <svg class="abs" style="left:14px;top:11px" width="14" height="18" viewBox="0 0 14 18"><rect x="0" y="0" width="14" height="18" rx="1.800" fill="#344859"/><g fill="#aecfe4"><rect x="2" y="2" width="10" height="3.500" rx=".5"/><rect x="2" y="7.500" width="2.300" height="2.100" rx=".4"/><rect x="5.850" y="7.500" width="2.300" height="2.100" rx=".4"/><rect x="9.700" y="7.500" width="2.300" height="2.100" rx=".4"/><rect x="2" y="10.700" width="2.300" height="2.100" rx=".4"/><rect x="5.850" y="10.700" width="2.300" height="2.100" rx=".4"/><rect x="9.700" y="10.700" width="2.300" height="5.300" rx=".4"/><rect x="2" y="13.900" width="2.300" height="2.100" rx=".4"/><rect x="5.850" y="13.900" width="2.300" height="2.100" rx=".4"/></g></svg>
    <span class="abs" style="left:36.500px;top:12px;line-height:18px">Calculator</span></div>
  <div class="abs rb b2" style="left:147.500px;top:117px;width:133px">
    <svg class="abs" style="left:14px;top:10.500px" width="14" height="19" viewBox="0 0 14 19"><path d="M0,0.300l1.750,1.300l1.750-1.300l1.750,1.300l1.750-1.300l1.750,1.300l1.750-1.300l1.750,1.300L14,0.300v18.400l-1.750-1.300l-1.750,1.300l-1.750-1.300l-1.750,1.300l-1.750-1.300l-1.750,1.300l-1.750-1.300L0,18.700z" fill="#344859"/><path d="M2.800,5.600h8.400M2.800,9.500h8.400M2.800,13.400h8.400" stroke="#aecfe4" stroke-width="1.500"/></svg>
    <span class="abs" style="left:37px;top:7px;line-height:14px">Drawer<br>Totals</span></div>

  <!-- wic panel -->
  <div class="abs" id="wic" style="left:4.500px;top:168.500px;width:281px;height:586px">
    <svg class="abs" style="left:102px;top:8px" width="17" height="15" viewBox="0 0 17 15"><path d="M5,6L8.500,1.200L12,6" fill="none" stroke="#344859" stroke-width="1.300"/><path d="M0.600,5.400h15.800a.6.600 0 0 1 .6.600v.9a.6.600 0 0 1-.6.600h-.3l-1.100,6.200a1.200,1.200 0 0 1-1.200,1H3.200a1.200,1.200 0 0 1-1.200-1L.9,7.500H.6a.6.600 0 0 1-.6-.6V6a.6.600 0 0 1 .6-.6z" fill="#344859"/><path d="M5.200,8.700v3.700M8.500,8.700v3.700M11.800,8.700v3.700" stroke="#f9ebdd" stroke-width="1.100" stroke-linecap="round"/></svg>
    <div class="abs" style="left:122.500px;top:5px;font-size:14.300px;line-height:20px;color:#555;white-space:nowrap">Wic Info:</div>
    <div class="abs" id="cb" style="left:4.500px;top:36.500px;width:272px;height:505px">
      <div class="abs" style="left:0;top:0;width:270px;height:21.700px;background:#f9c98c;border-radius:4px 4px 0 0;text-align:center;font-size:13.700px;line-height:21.500px;color:#555;border-bottom:1px solid #fbe3c8">Card Balance</div>
      <div class="wi t" style="top:24px;height:67px"><b>FRUITS AND VEGETABLES CASH<br>VALUE BENEFIT</b> 19/000<br>15.4 $$$ <span class="u">Used <b>5.46</b> $$$</span></div>
      <div class="wi t" style="top:95px;height:45.500px"><b>KOSHER MILK WHOLE</b> 51/014<br>3 GAL <span class="u">Used <b>0.75</b> GAL</span></div>
      <div class="wi" style="top:144.500px;height:45.500px"><b>CHEESE KOSHER</b> 02/005<br>16 OZ</div>
      <div class="wi" style="top:193.500px;height:45.500px"><b>EGGS</b> 03/000<br>1 DOZ</div>
      <div class="wi" style="top:243px;height:45.500px"><b>CEREAL</b> 05/000<br>9 OZ</div>
      <div class="wi" style="top:292px;height:67px"><b>BEANS PEAS LENTILS PEANUT<br>BUTTER</b> 06/000<br>0 CNT</div>
      <div class="wi" style="top:363px;height:67px"><b>WHOLE WHEAT BREAD; TORTILLAS;<br>RICE; PASTA</b> 16/000<br>32 OZ</div>
      <div class="wi" style="top:434px;height:67px"><b>JUICE 16OZ FROZEN OR 64OZ<br>CONTAINER</b> 54/000<br>1 CNT</div>
    </div>
    <div class="abs gb" style="left:27.500px;top:549.500px;width:110px"><svg class="abs" style="left:11px;top:9px" width="18" height="14" viewBox="0 0 18 14" fill="none" stroke="#fff" stroke-width="1.200"><path d="M9,1V12.500M5,13h8M2.500,3.200h13" stroke-width="1.400"/><path d="M0.800,8L3.400,3.500L6,8a2.600,2 0 0 1-5.200,0z" fill="#fff" fill-opacity=".35"/><path d="M12,8L14.600,3.500L17.200,8a2.600,2 0 0 1-5.200,0z" fill="#fff" fill-opacity=".35"/></svg><span class="abs" style="left:32px;top:0">Get Balance</span></div>
    <div class="abs gb" style="left:183.500px;top:549.500px;width:70px"><svg class="abs" style="left:12px;top:10px" width="13" height="13" viewBox="0 0 18 18"><path d="M3.900,5.500V1.800a1.200,1.200 0 0 1 1.200-1.200h6.900l2.100,2.100v2.800" fill="none" stroke="#fff" stroke-width="2"/><path d="M2,5.700h14a2,2 0 0 1 2,2v5a.7.700 0 0 1-.7.700H.7a.7.700 0 0 1-.7-.7v-5a2,2 0 0 1 2-2z" fill="#fff"/><rect x="3.900" y="11" width="10.200" height="5.700" fill="#3c9a3e" stroke="#fff" stroke-width="2"/></svg><span class="abs" style="left:31px;top:0">Print</span></div>
  </div>

  <!-- red arrows (annotation) -->
  <svg class="abs" style="left:-24px;top:260px;z-index:20" width="100" height="95" viewBox="0 0 100 95"><g fill="#e60b0b" filter="url(#ash)"><path d="M0.700,18.800H59V6.200L94.800,24.300L59,41.700V30.200H0.700z"/><path d="M0.700,64.200H59V52L94.800,70L59,87.500V75.500H0.700z"/></g></svg>
</div>

</div>
</body>
</html>
